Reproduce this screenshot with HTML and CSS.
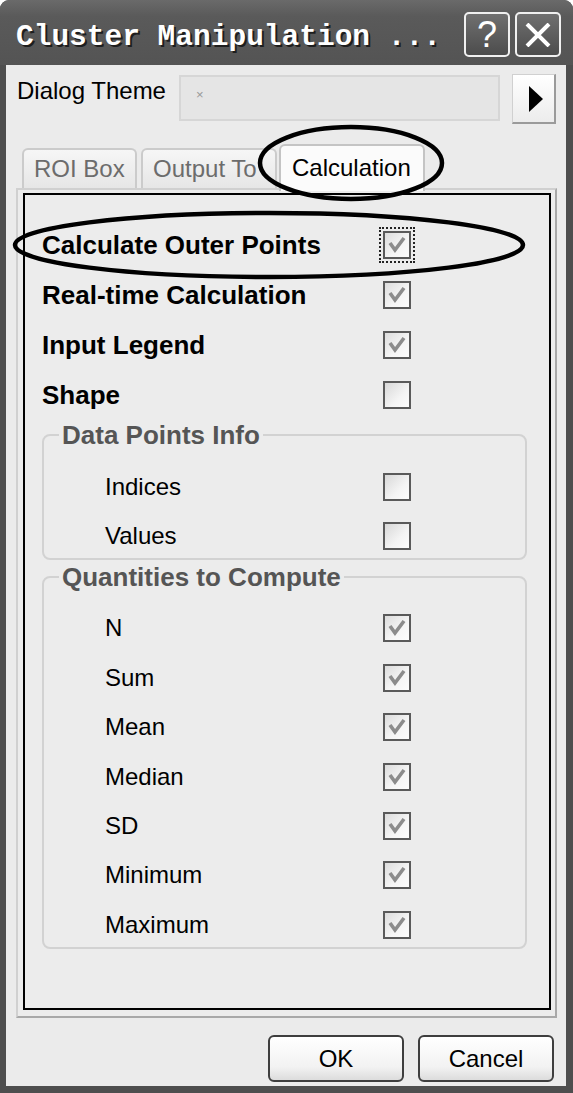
FILE: index.html
```html
<!DOCTYPE html>
<html lang="en">
<head>
  <meta charset="UTF-8">
  <title>Cluster Manipulation</title>
  <link rel="stylesheet" href="styles.css">
</head>
<body>

  <div class="window">
    <!-- TITLE BAR -->
    <div class="titlebar">
      <span class="title">Cluster Manipulation ...</span>
      <div class="caption-btns">
        <span class="cap-btn help">?</span>
        <span class="cap-btn">
          <svg width="26" height="24" viewBox="0 0 26 24"><path d="M2 1 L24 23 M24 1 L2 23" stroke="#fff" stroke-width="4" fill="none"/></svg>
        </span>
      </div>
    </div>

    <div class="client">
      <div class="theme-row">
        <span class="theme-label">Dialog Theme</span>
        <div class="theme-box"><span class="theme-x">×</span></div>
        <button class="arrow-btn">
          <svg width="14" height="26" viewBox="0 0 14 26"><path d="M0 0 L14 13 L0 26 Z" fill="#000"/></svg>
        </button>
      </div>

      <!-- TABS -->
      <div class="tabs">
        <div class="tab">ROI Box</div>
        <div class="tab tab-output">Output To</div>
        <div class="tab active">Calculation</div>
      </div>

      <div class="panel">
        <div class="page">
          <div class="row">
            <span class="lbl bold">Calculate Outer Points</span>
            <span class="chk on focus"></span>
          </div>
          <div class="row">
            <span class="lbl bold">Real-time Calculation</span>
            <span class="chk on"></span>
          </div>
          <div class="row">
            <span class="lbl bold">Input Legend</span>
            <span class="chk on"></span>
          </div>
          <div class="row">
            <span class="lbl bold">Shape</span>
            <span class="chk"></span>
          </div>

          <fieldset class="group">
            <legend>Data Points Info</legend>
            <div class="row sub"><span class="lbl">Indices</span><span class="chk"></span></div>
            <div class="row sub"><span class="lbl">Values</span><span class="chk"></span></div>
          </fieldset>

          <fieldset class="group group-2">
            <legend>Quantities to Compute</legend>
            <div class="row sub"><span class="lbl">N</span><span class="chk on"></span></div>
            <div class="row sub"><span class="lbl">Sum</span><span class="chk on"></span></div>
            <div class="row sub"><span class="lbl">Mean</span><span class="chk on"></span></div>
            <div class="row sub"><span class="lbl">Median</span><span class="chk on"></span></div>
            <div class="row sub"><span class="lbl">SD</span><span class="chk on"></span></div>
            <div class="row sub"><span class="lbl">Minimum</span><span class="chk on"></span></div>
            <div class="row sub"><span class="lbl">Maximum</span><span class="chk on"></span></div>
          </fieldset>
        </div>
      </div>

      <div class="footer">
        <button class="btn">OK</button>
        <button class="btn">Cancel</button>
      </div>
    </div>

    <!-- ANNOTATION MARKS -->
    <svg class="mark mark-tab" width="196" height="84" viewBox="0 0 196 84">
      <ellipse cx="98" cy="42" rx="91" ry="36" fill="none" stroke="#000" stroke-width="4.5"/>
    </svg>
    <svg class="mark mark-row" width="520" height="76" viewBox="0 0 520 76">
      <ellipse cx="260" cy="38" rx="254" ry="32" fill="none" stroke="#000" stroke-width="4.5"/>
    </svg>
  </div>

</body>
</html>
```

FILE: styles.css
```css
/* RESET + BASE */
* { margin: 0; padding: 0; box-sizing: border-box; }
body { background: #fff; font-family: "Liberation Sans", Arial, sans-serif; color: #000; }

/* WINDOW FRAME */
.window {
  position: relative;
  width: 573px;
  height: 1093px;
  background: #4e4e4e;
  border-radius: 9px 9px 0 0;
  display: flex;
  flex-direction: column;
  overflow: hidden;
}

.titlebar {
  height: 65px;
  padding: 12px 12px 0 16px;
  display: flex;
  justify-content: space-between;
  align-items: flex-start;
  background: linear-gradient(#6a6a6a, #5a5a5a 25%, #545454);
}
.title {
  font-family: "Liberation Mono", "Courier New", monospace;
  font-weight: bold;
  font-size: 29.5px;
  line-height: 45px;
  margin-top: 3px;
  color: #fff;
  text-shadow: 2px 2px 0 #1e1e1e;
  white-space: nowrap;
}
.caption-btns { display: flex; gap: 5px; }
.cap-btn {
  width: 46px;
  height: 45px;
  border: 2px solid #f0f0f0;
  border-radius: 5px;
  background: linear-gradient(#707070, #4c4c4c);
  display: flex;
  justify-content: center;
  align-items: center;
  color: #fff;
}
.cap-btn.help { font-size: 36px; line-height: 1; }

/* CLIENT AREA */
.client {
  flex: 1;
  margin: 0 7px 7px 6px;
  background: #ebebeb;
  display: flex;
  flex-direction: column;
}

.theme-row {
  display: flex;
  align-items: flex-start;
  height: 50px;
  margin-top: 9px;
  padding-left: 11px;
}
.theme-label {
  width: 162px;
  font-size: 24px;
  line-height: 27px;
  margin-top: 3px;
}
.theme-box {
  width: 321px;
  height: 46px;
  margin-top: 1px;
  background: #e5e5e5;
  border: 2px solid #d6d6d6;
  padding: 8px 0 0 15px;
}
.theme-x { font-size: 13px; color: #999; }
.arrow-btn {
  width: 44px;
  height: 50px;
  margin-left: 12px;
  background: linear-gradient(#ffffff, #ececec);
  border: 1px solid #d0d0d0;
  border-right: 2px solid #9a9a9a;
  border-bottom: 2px solid #9a9a9a;
  display: flex;
  justify-content: center;
  align-items: center;
  padding-left: 4px;
}

/* TABS */
.tabs {
  display: flex;
  align-items: flex-end;
  height: 44px;
  margin-top: 20px;
  padding-left: 16px;
}
.tab {
  width: 115px;
  height: 40px;
  padding-left: 10px;
  font-size: 24px;
  line-height: 38px;
  color: #6c6c6c;
  background: linear-gradient(#f6f6f6, #e6e6e6);
  border: 2px solid #cbcbcb;
  border-bottom: none;
  border-radius: 6px 6px 0 0;
  white-space: nowrap;
  overflow: hidden;
}
.tab-output { width: 136px; margin-left: 4px; }
.tab.active {
  position: relative;
  z-index: 1;
  width: 146px;
  height: 47px;
  margin-left: 2px;
  margin-bottom: -3px;
  line-height: 44px;
  padding-left: 11px;
  color: #000;
  background: #fbfbfb;
  border-color: #c4c4c4;
}

/* TAB PAGE */
.panel {
  height: 830px;
  margin: 0 9px 0 10px;
  padding: 3px 4px 6px 5px;
  border: 2px solid;
  border-color: #d0d0d0 #a8a8a8 #a8a8a8 #d0d0d0;
  background: #ececec;
  display: flex;
}
.page {
  flex: 1;
  border: 2px solid #000;
  background: #ececec;
  padding: 28px 0 0 17px;
}

.row {
  display: flex;
  align-items: center;
  height: 44px;
  margin-bottom: 6px;
}
.lbl {
  width: 341px;
  font-size: 24px;
}
.lbl.bold { font-weight: bold; font-size: 26px; }

.row.sub { padding-left: 61px; margin-bottom: 5.4px; }
.row.sub .lbl { width: 278px; }
.row.sub:last-child { margin-bottom: 0; }

/* CHECKBOXES */
.chk {
  width: 28px;
  height: 28px;
  border: 2px solid #5a5a5a;
  background: linear-gradient(135deg, #d8d8d8, #f4f4f4 60%, #fdfdfd);
}
.chk.on {
  background-image: url("data:image/svg+xml,%3Csvg xmlns='http://www.w3.org/2000/svg' width='24' height='24'%3E%3Cpath d='M5 10 L10 17 L19 5' stroke='%238c8c8c' stroke-width='3.6' fill='none'/%3E%3C/svg%3E"), linear-gradient(135deg, #dcdcdc, #f6f6f6 60%, #fdfdfd);
}
.chk.focus { outline: 2px dotted #222; outline-offset: 2px; }

/* GROUP BOXES */
.group {
  width: 485px;
  margin-top: -2px;
  padding: 16px 0 0 0;
  border: 2px solid #d2d2d2;
  border-radius: 8px;
}
.group legend {
  margin-left: 15px;
  padding: 0 3px;
  font-size: 26px;
  font-weight: bold;
  line-height: 28px;
  color: #555;
}
.group-2 { margin-top: 3px; padding-top: 15px; }

/* BUTTONS */
.footer {
  display: flex;
  justify-content: flex-end;
  gap: 14px;
  margin-top: 17px;
  padding-right: 12px;
}
.btn {
  width: 136px;
  height: 47px;
  font-family: "Liberation Sans", Arial, sans-serif;
  font-size: 24px;
  color: #000;
  background: linear-gradient(#ffffff, #f2f2f2 70%, #dcdcdc);
  border: 2px solid #3e3e3e;
  border-radius: 6px;
}

/* ANNOTATIONS */
.mark { position: absolute; pointer-events: none; z-index: 5; }
.mark-tab { left: 253px; top: 121px; }
.mark-row { left: 9px; top: 207px; }
```
